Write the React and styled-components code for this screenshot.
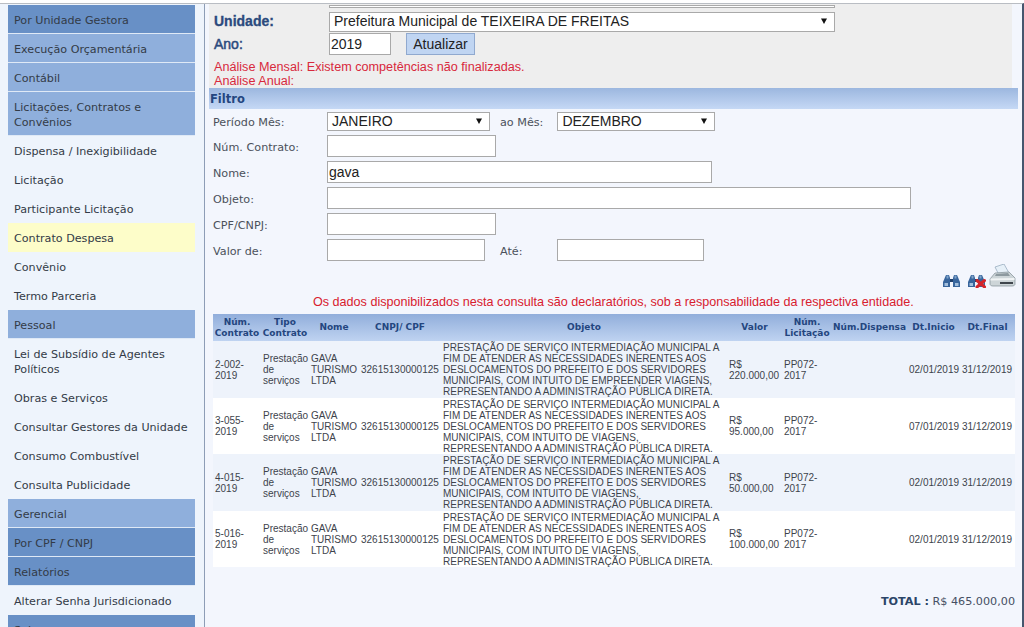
import React from "react";
import styled, { createGlobalStyle } from "styled-components";

const Global = createGlobalStyle`
  html, body { margin: 0; padding: 0; height: 627px; overflow: hidden; background: #fff; }
  * { box-sizing: border-box; }
`;

const Page = styled.div`
  display: flex; width: 1024px; height: 627px; overflow: hidden; padding-top: 3px;
  background: #fff; font-family: "Liberation Sans", Arial, sans-serif;
`;
const Frame = styled.div`
  display: flex; flex: 1; min-width: 0; border-top: 1px solid #b9bdc3; border-right: 2px solid #46566e; background: #f3f6fd;
`;
const Sidebar = styled.nav`
  width: 205px; flex: none; padding: 1px 9px 0 8px; border-right: 1px solid #8d9db6; background: #eef4fc;
  font-family: "DejaVu Sans", Verdana, sans-serif; font-size: 11.15px; line-height: 15px; color: #333b47;
`;
const Item = styled.div`
  display: flex; align-items: center; padding: 2px 0 0 6px; height: ${p => p.$h || 29}px;
  background: ${p => p.$kind === "dark" ? "#6890c6"
    : p.$kind === "light" ? "#8fafdc"
    : p.$kind === "active" ? "#fdfdc9" : "transparent"};
  border-bottom: ${p => p.$kind === "dark" || p.$kind === "light" ? "1px solid #dfe9f6" : "0"};
`;
const Main = styled.main`
  flex: 1; min-width: 0; padding-left: 4px; display: flex; flex-direction: column;
`;
const TopPanel = styled.section`
  width: 803px; height: 84px; background: #eeeeee; padding-left: 5px; overflow: hidden;
`;
const TopRow = styled.div`
  display: flex; align-items: center; height: ${p => p.$h || 22}px; margin-bottom: ${p => p.$mb || 0}px;
`;
const CutRow = styled(TopRow)`
  height: 4px; align-items: flex-end; margin-bottom: 3px; padding-left: 115px;
`;
const TopLabel = styled.label`
  width: 115px; flex: none; font-size: 14px; color: #2b4a7d; font-weight: ${p => p.$strong ? 700 : 400};
  padding-bottom: ${p => p.$strong ? 2 : 0}px;
  -webkit-text-stroke: ${p => p.$strong ? 0.3 : 0.5}px #2b4a7d;
`;
const SelectBox = styled.div`
  display: flex; align-items: center; justify-content: space-between; flex: none;
  width: ${p => p.$w}px; height: ${p => p.$h || 20}px; padding: 0 7px ${p => p.$pb || 0}px ${p => p.$pl || 4}px;
  background: #fff; border: 1px solid #a9a9a9; font-size: 14px; color: #222; white-space: nowrap;
`;
const Arrow = styled.svg`
  width: 6px; height: 6px; flex: none; fill: #111;
`;
const TextInput = styled.input`
  flex: none; width: ${p => p.$w}px; height: 22px; padding: 0 1px; border: 1px solid #a9a9a9; background: #fff;
  font: 14px "Liberation Sans", Arial, sans-serif; color: #222; outline: 0; margin: 0;
`;
const UpdateButton = styled.button`
  width: 69px; height: 22px; margin-left: 15px; padding: 0; background: #c0d5f2; border: 1px solid #90a9cf;
  font: 14px "Liberation Sans", Arial, sans-serif; color: #222;
`;
const Alert = styled.div`
  font-size: 12.65px; line-height: 14px; color: #d8293c; white-space: nowrap;
`;
const FilterBar = styled.div`
  width: 809px; height: 21px; padding-left: 1px; line-height: 22px; background: linear-gradient(#9cb7df, #c5d8f5);
  font-family: "DejaVu Sans", Verdana, sans-serif; font-weight: 700; font-size: 11.5px; color: #24467f;
`;
const Form = styled.form`
  display: flex; flex-direction: column; padding: 0 0 0 4px;
`;
const Row = styled.div`
  display: flex; align-items: center; height: ${p => p.$h || 26}px;
`;
const Label = styled.label`
  width: 114px; flex: none; padding-top: 2px; font-family: "DejaVu Sans", Verdana, sans-serif; font-size: 11.2px; color: #4b515b;
`;
const InlineLabel = styled(Label)`
  width: auto; margin-left: ${p => p.$ml}px; margin-right: ${p => p.$mr}px;
`;
const Tools = styled.div`
  display: flex; justify-content: flex-end; align-items: flex-end; height: 24px; padding-right: 6px; margin-top: 1px;
`;
const ToolIcon = styled.svg`
  flex: none; margin-right: ${p => p.$mr || 0}px;
`;
const Notice = styled.p`
  margin: 7px 0 4px; height: 15px; padding-left: 104px; font-size: 12.6px; line-height: 15px; color: #d8202e; white-space: nowrap;
`;
const TableWrap = styled.div`
  margin-left: 4px; width: 802px;
`;
const Table = styled.table`
  width: 802px; table-layout: fixed; border-collapse: collapse;
  font-family: "Liberation Sans", Arial, sans-serif; font-size: 10px; line-height: 11px; color: #3d434c;
`;
const Head = styled.th`
  padding: 0 1px; height: 27px; background: linear-gradient(#91aedb, #bfd3f1); text-align: center; vertical-align: middle;
  font-family: "DejaVu Sans", Verdana, sans-serif; font-size: 9px; line-height: 11px; font-weight: 700; color: #24467f;
`;
const DataRow = styled.tr`
  height: ${p => p.$h}px; background: ${p => p.$alt ? "#ffffff" : "#eef3fb"};
`;
const Cell = styled.td`
  padding: 0 2px; vertical-align: middle; overflow: hidden;
  white-space: ${p => p.$nowrap ? "nowrap" : "normal"};
`;
const Total = styled.div`
  text-align: right; margin-top: 28px; font-family: "DejaVu Sans", Verdana, sans-serif; font-size: 11.2px; color: #465064;
  b { color: #2b4568; }
`;

const Caret = () => <Arrow viewBox="0 0 6 6"><path d="M0 .5h6L3 6z" /></Arrow>;

const Binoculars = ({ cross, mr }) => (
  <ToolIcon width="19" height="14" viewBox="0 0 19 14" $mr={mr}>
    <path d="M4 1h3l1 3v9H1V8z" fill="#38659c" />
    <path d="M12 1h3l3 7v5h-7V4z" fill="#38659c" />
    <path d="M8 5h3v3H8z" fill="#1f3f6b" />
    <path d="M2.5 9h3.5v3H2.5zM13 9h3.5v3H13z" fill="#a3bfdc" />
    <path d="M4.5 1.5h2v3h-2zM12.5 1.5h2v3h-2z" fill="#7fa3c9" />
    {cross && <path d="M10 6.5l7.5 6.5M17.5 6.5L10 13" stroke="#d4242a" strokeWidth="3" strokeLinecap="round" />}
  </ToolIcon>
);

const Printer = () => (
  <ToolIcon width="27" height="24" viewBox="0 0 27 24">
    <path d="M6 3l9-3 5 9-10 2z" fill="#e6f0f8" stroke="#8ea3b8" strokeWidth=".7" />
    <path d="M1 15l5-6 14-1 6 6v6c0 1-1 2-3 2H4c-2 0-3-1-3-2z" fill="#cdd5d8" stroke="#7f8c93" strokeWidth=".7" />
    <path d="M1.5 14.5l24-.5v2l-24 .5z" fill="#f1f4f5" />
    <path d="M11 18h13v2H11z" fill="#3f464d" />
    <path d="M7 10l12-1 2 3H6z" fill="#8d999f" />
  </ToolIcon>
);

const menu = [
  ["Por Unidade Gestora", "dark", 29], ["Execução Orçamentária", "light", 29], ["Contábil", "light", 29],
  ["Licitações, Contratos e Convênios", "light", 44], ["Dispensa / Inexigibilidade"], ["Licitação"],
  ["Participante Licitação"], ["Contrato Despesa", "active", 29], ["Convênio"], ["Termo Parceria"],
  ["Pessoal", "light", 29], ["Lei de Subsídio de Agentes Políticos", null, 44], ["Obras e Serviços"],
  ["Consultar Gestores da Unidade"], ["Consumo Combustível"], ["Consulta Publicidade"],
  ["Gerencial", "light", 29], ["Por CPF / CNPJ", "dark", 29], ["Relatórios", "dark", 29],
  ["Alterar Senha Jurisdicionado"], ["Sair", "dark", 29],
];

const objA = "PRESTAÇÃO DE SERVIÇO INTERMEDIAÇÃO MUNICIPAL A FIM DE ATENDER AS NECESSIDADES INERENTES AOS DESLOCAMENTOS DO PREFEITO E DOS SERVIDORES MUNICIPAIS, COM INTUITO DE EMPREENDER VIAGENS, REPRESENTANDO A ADMINISTRAÇÃO PÚBLICA DIRETA.";
const objB = "PRESTAÇÃO DE SERVIÇO INTERMEDIAÇÃO MUNICIPAL A FIM DE ATENDER AS NECESSIDADES INERENTES AOS DESLOCAMENTOS DO PREFEITO E DOS SERVIDORES MUNICIPAIS, COM INTUITO DE VIAGENS, REPRESENTANDO A ADMINISTRAÇÃO PÚBLICA DIRETA.";
const rows = [
  { n: "2-002-2019", o: objA, v: "R$ 220.000,00", i: "02/01/2019", h: 57 },
  { n: "3-055-2019", o: objB, v: "R$ 95.000,00", i: "07/01/2019", h: 56 },
  { n: "4-015-2019", o: objB, v: "R$ 50.000,00", i: "02/01/2019", h: 57 },
  { n: "5-016-2019", o: objB, v: "R$ 100.000,00", i: "02/01/2019", h: 56 },
];
const widths = [48, 48, 50, 82, 286, 55, 50, 75, 53, 55];
const heads = ["Núm. Contrato", "Tipo Contrato", "Nome", "CNPJ/ CPF", "Objeto", "Valor", "Núm. Licitação", "Núm.Dispensa", "Dt.Inicio", "Dt.Final"];

export default function App() {
  return (
    <Page>
      <Global />
      <Frame>
        <Sidebar>
          {menu.map(([t, k, h]) => <Item key={t} $kind={k} $h={h}>{t}</Item>)}
        </Sidebar>
        <Main>
          <TopPanel>
            <CutRow><SelectBox $w={506} $h={3} /></CutRow>
            <TopRow>
              <TopLabel $strong>Unidade:</TopLabel>
              <SelectBox $w={506} $pb={2}>Prefeitura Municipal de TEIXEIRA DE FREITAS<Caret /></SelectBox>
            </TopRow>
            <TopRow $mb={5}>
              <TopLabel>Ano:</TopLabel>
              <TextInput $w={62} defaultValue="2019" />
              <UpdateButton type="button">Atualizar</UpdateButton>
            </TopRow>
            <Alert>Análise Mensal: Existem competências não finalizadas.<br />Análise Anual:</Alert>
          </TopPanel>
          <FilterBar>Filtro</FilterBar>
          <Form>
            <Row $h={24}>
              <Label>Período Mês:</Label>
              <SelectBox $w={163} $h={19}>JANEIRO<Caret /></SelectBox>
              <InlineLabel $ml={10} $mr={14}>ao Mês:</InlineLabel>
              <SelectBox $w={158} $h={19}>DEZEMBRO<Caret /></SelectBox>
            </Row>
            <Row><Label>Núm. Contrato:</Label><TextInput $w={169} /></Row>
            <Row><Label>Nome:</Label><TextInput $w={385} defaultValue="gava" /></Row>
            <Row><Label>Objeto:</Label><TextInput $w={584} /></Row>
            <Row><Label>CPF/CNPJ:</Label><TextInput $w={169} /></Row>
            <Row>
              <Label>Valor de:</Label>
              <TextInput $w={158} />
              <InlineLabel $ml={15} $mr={34}>Até:</InlineLabel>
              <TextInput $w={147} />
            </Row>
          </Form>
          <Tools>
            <Binoculars mr={6} /><Binoculars cross mr={3} /><Printer />
          </Tools>
          <Notice>Os dados disponibilizados nesta consulta são declaratórios, sob a responsabilidade da respectiva entidade.</Notice>
          <TableWrap>
            <Table>
              <colgroup>{widths.map((w, i) => <col key={i} width={w} />)}</colgroup>
              <thead><tr>{heads.map(h => <Head key={h}>{h}</Head>)}</tr></thead>
              <tbody>
                {rows.map((r, i) => (
                  <DataRow key={r.n} $alt={i % 2 === 1} $h={r.h}>
                    <Cell>{r.n}</Cell>
                    <Cell>Prestação de serviços</Cell>
                    <Cell>GAVA TURISMO LTDA</Cell>
                    <Cell $nowrap>32615130000125</Cell>
                    <Cell>{r.o}</Cell>
                    <Cell>{r.v}</Cell>
                    <Cell>PP072-2017</Cell>
                    <Cell />
                    <Cell $nowrap>{r.i}</Cell>
                    <Cell $nowrap>31/12/2019</Cell>
                  </DataRow>
                ))}
              </tbody>
            </Table>
            <Total><b>TOTAL :</b> R$ 465.000,00</Total>
          </TableWrap>
        </Main>
      </Frame>
    </Page>
  );
}
